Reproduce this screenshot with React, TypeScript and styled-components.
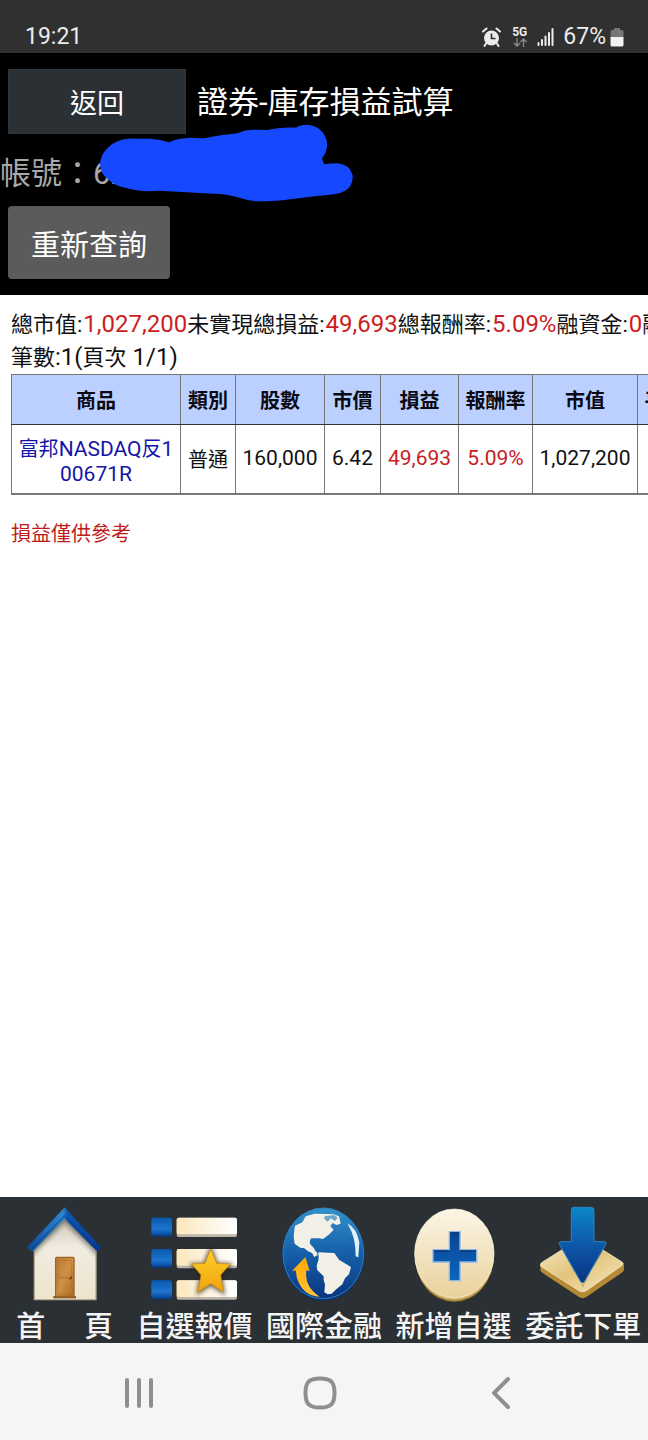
import React from 'react';
import styled, { createGlobalStyle } from 'styled-components';

const GlobalStyle = createGlobalStyle`
  * { box-sizing: border-box; }
  body {
    margin: 0;
    background: #fff;
    font-family: Roboto, "Noto Sans CJK TC", sans-serif;
  }
  button { font-family: inherit; cursor: pointer; }
`;

const Screen = styled.div`
  display: flex;
  flex-direction: column;
  min-height: 100vh;
  overflow: hidden;
`;

/* ---------- status bar ---------- */

const StatusBar = styled.div`
  display: flex;
  align-items: center;
  justify-content: space-between;
  height: 53px;
  padding: 20px 24px 0 25px;
  background: #303030;
  color: #ececec;
  font-size: 23px;
  line-height: 32px;
`;

const StatusGroup = styled.div`
  display: flex;
  align-items: center;
`;

const StatusIcon = styled.svg<{ $gap?: number }>`
  display: block;
  margin-right: ${(p) => p.$gap ?? 0}px;
`;

const Network = styled.div`
  display: flex;
  flex-direction: column;
  align-items: center;
  margin-right: 10px;
  font-size: 12px;
  font-weight: 700;
  line-height: 11px;
`;

const Percent = styled.span`
  margin-right: 4px;
`;

/* ---------- header ---------- */

const Header = styled.header`
  position: relative;
  display: flex;
  flex-direction: column;
  align-items: flex-start;
  padding: 16px 0 16px;
  background: #000;
  color: #fff;
`;

const TitleRow = styled.div`
  display: flex;
  align-items: center;
  gap: 11px;
  padding-left: 8px;
`;

const BackButton = styled.button`
  width: 178px;
  height: 65px;
  border: 1px solid #30363a;
  background: #2b3034;
  color: #fff;
  font-size: 27px;
`;

const Title = styled.h1`
  margin: 0;
  padding-top: 2px;
  font-size: 31px;
  font-weight: 400;
  line-height: 40px;
`;

const Account = styled.div`
  padding: 20px 0 12px;
  color: #a9a9a9;
  font-size: 31px;
  line-height: 40px;
`;

const Scribble = styled.svg`
  position: absolute;
  left: 99px;
  top: 71px;
`;

const QueryButton = styled.button`
  height: 73px;
  margin-left: 8px;
  padding: 0 23px;
  border: 0;
  border-radius: 4px;
  background: #5b5b5c;
  color: #fff;
  font-size: 29px;
`;

/* ---------- report ---------- */

const Report = styled.main`
  flex: 1;
  padding: 13px 0 0 11px;
  overflow: hidden;
  background: #fff;
  color: #111;
`;

const Summary = styled.p`
  margin: 0;
  font-size: 22px;
  line-height: 33px;
  white-space: nowrap;
`;

const Latin = styled.span`
  font-size: 24px;
  line-height: 24px;
`;

const Value = styled(Latin)`
  margin-left: 1px;
  color: #cc1e1e;
`;

const Holdings = styled.table`
  width: 720px;
  table-layout: fixed;
  border-collapse: collapse;
  text-align: center;
  font-size: 21px;
  line-height: 25px;
`;

const Col = styled.col<{ $w: number }>`
  width: ${(p) => p.$w}px;
`;

const HeadCell = styled.th`
  height: 50px;
  padding: 4px 0 0;
  border: 1px solid #777;
  border-bottom-color: #333;
  background: #bbd0ff;
  color: #0a0a14;
  font-size: 20px;
  font-weight: 700;
  white-space: nowrap;
`;

const Cell = styled.td<{ $tone?: 'gain' }>`
  height: 69px;
  padding: 0;
  border: 1px solid #777;
  border-bottom-width: 2px;
  color: ${(p) => (p.$tone === 'gain' ? '#c8201f' : '#111')};
`;

const Han = styled.span`
  font-size: 20px;
`;

const Kind = styled.div`
  padding-top: 4px;
  font-size: 20px;
`;

const ProductLink = styled.a`
  display: block;
  padding-top: 6px;
  color: #1414a8;
  text-decoration: none;
`;

const Notice = styled.p`
  margin: 24px 0 0;
  color: #bf1a1a;
  font-size: 20px;
  line-height: 30px;
`;

/* ---------- bottom bars ---------- */

const TabBar = styled.nav`
  display: grid;
  grid-template-columns: repeat(5, 1fr);
  height: 146px;
  background: #2b3034;
`;

const Tab = styled.button`
  display: flex;
  flex-direction: column;
  align-items: center;
  gap: 3px;
  padding: 9px 0 0;
  border: 0;
  background: none;
  color: #f4f4f4;
  font-size: 29px;
  font-weight: 500;
  line-height: 36px;
  white-space: nowrap;
`;

const SystemNav = styled.nav`
  display: grid;
  grid-template-columns: repeat(3, 1fr);
  height: 97px;
  padding: 3px 56px 0 48px;
  background: #f5f5f5;
`;

const NavKey = styled.button`
  display: flex;
  align-items: center;
  justify-content: center;
  padding: 0;
  border: 0;
  background: none;
`;

/* ---------- tab drawings ---------- */

const HomeIcon = () => (
  <svg width="90" height="100" viewBox="60 27 270 300" aria-hidden="true">
    <defs>
      <linearGradient id="wall" x1="0" y1="0" x2="0" y2="1">
        <stop offset="0" stopColor="#cfc8ba" />
        <stop offset="0.35" stopColor="#f1ece1" />
        <stop offset="1" stopColor="#eee4cd" />
      </linearGradient>
      <linearGradient id="roof" x1="0" y1="0" x2="1" y2="0">
        <stop offset="0" stopColor="#0c4a9c" />
        <stop offset="0.48" stopColor="#2f86cf" />
        <stop offset="0.55" stopColor="#0d57b0" />
        <stop offset="1" stopColor="#083a8e" />
      </linearGradient>
      <linearGradient id="door" x1="0" y1="0" x2="1" y2="1">
        <stop offset="0" stopColor="#b87a35" />
        <stop offset="0.5" stopColor="#d19145" />
        <stop offset="1" stopColor="#a96623" />
      </linearGradient>
      <filter id="eaves" x="-20%" y="-20%" width="140%" height="140%">
        <feGaussianBlur stdDeviation="6" />
      </filter>
      <clipPath id="wallShape">
        <path d="M103 158 194 66l94 92v150H103z" />
      </clipPath>
    </defs>
    <path d="M103 158 194 66l94 92v150H103z" fill="url(#wall)" stroke="#b5ac92" strokeWidth="4" />
    <g clipPath="url(#wallShape)">
      <path d="M90 166 194 62l104 104" fill="none" stroke="#5c564c" strokeWidth="24" opacity="0.6" filter="url(#eaves)" />
    </g>
    <path d="M194 31 303 151l-11 13-98-98-97 98-16-13z" fill="url(#roof)" />
    <path d="M92 158 194 56l100 102" fill="none" stroke="#0a2f75" strokeWidth="4" opacity="0.45" />
    <path d="M160 297h68v7h-68z" fill="#8e5a22" />
    <rect x="167" y="181" width="55" height="117" rx="3" fill="url(#door)" stroke="#9c642a" strokeWidth="4" />
    <path d="M174 190h41v50h-41zM174 244h41v48h-41z" fill="none" stroke="#ad7432" strokeWidth="2" />
    <circle cx="211" cy="242" r="5" fill="#6a3d10" />
    <circle cx="209" cy="240" r="2" fill="#f6dca0" />
  </svg>
);

const WatchIcon = () => (
  <svg width="90" height="100" viewBox="58 27 270 300" aria-hidden="true">
    <defs>
      <linearGradient id="cube" x1="0" y1="0" x2="0" y2="1">
        <stop offset="0" stopColor="#0b59ad" />
        <stop offset="0.65" stopColor="#1c74d0" />
        <stop offset="1" stopColor="#0a4a9a" />
      </linearGradient>
      <linearGradient id="bar" x1="0" y1="0" x2="1" y2="0">
        <stop offset="0" stopColor="#fde7bb" />
        <stop offset="0.6" stopColor="#fdf6e6" />
        <stop offset="1" stopColor="#ffffff" />
      </linearGradient>
      <linearGradient id="star" x1="0" y1="0" x2="0" y2="1">
        <stop offset="0" stopColor="#ffd02a" />
        <stop offset="1" stopColor="#f0a20c" />
      </linearGradient>
      <filter id="glow" x="-30%" y="-30%" width="160%" height="160%">
        <feGaussianBlur stdDeviation="7" />
      </filter>
    </defs>
    {[62, 156, 250].map((y) => (
      <g key={y}>
        <rect x="65" y={y} width="62" height="57" rx="8" fill="#083c80" />
        <rect x="65" y={y} width="62" height="52" rx="8" fill="url(#cube)" />
        <rect x="141" y={y} width="181" height="58" rx="6" fill="#bdb6a8" />
        <rect x="141" y={y} width="181" height="50" rx="6" fill="url(#bar)" />
      </g>
    ))}
    <path d="M243 156l18 45 41 2-29 33 8 51-38-25-38 25 8-51-27-33 38-2z" fill="#2b2210" stroke="#2b2210" strokeWidth="8" opacity="0.7" filter="url(#glow)" />
    <path d="M243 156l18 43 41 2-29 33 8 51-38-25-38 25 9-51-28-33 40-2z" fill="url(#star)" stroke="#c9860a" strokeWidth="2" />
  </svg>
);

const GlobeIcon = () => (
  <svg width="90" height="100" viewBox="58 27 270 300" aria-hidden="true">
    <defs>
      <linearGradient id="sea" x1="0" y1="0" x2="0" y2="1">
        <stop offset="0" stopColor="#3391cb" />
        <stop offset="0.5" stopColor="#165fa9" />
        <stop offset="1" stopColor="#0a3580" />
      </linearGradient>
      <linearGradient id="swoosh" x1="0" y1="0" x2="0" y2="1">
        <stop offset="0" stopColor="#ffa800" />
        <stop offset="1" stopColor="#ffc43a" />
      </linearGradient>
    </defs>
    <ellipse cx="191" cy="172" rx="124" ry="139" fill="#0b346f" />
    <ellipse cx="191" cy="169" rx="121" ry="136" fill="url(#sea)" stroke="#2f7fba" strokeWidth="3" />
    <path d="M106 86L128 76 138 58 165 50 195 51 222 52 238 58 243 80 230 84 219 78 212 88 222 98 209 112 190 126 178 124 154 124 150 134 152 142 163 154 167 162 172 166 174 174 164 180 157 168 144 162 134 154 122 152 105 140 102 120 104 98z" fill="#f3f0e7" />
    <path d="M195 58l29-4 10 8-8 10-13-8-9 10-10-8z" fill="#3b91c6" opacity="0.75" />
    <path d="M176 166L224 168 238 188 274 210 268 232 256 244 248 262 228 278 216 290 204 292 194 286 196 262 192 250 192 238 173 220 171 206 177 186z" fill="#f3f0e7" />
    <path d="M263 79q28 15 36 57l-3 45-8-3q1-57-25-99z" fill="#e2f1fb" />
    <path d="M137 180L150 222 140 220Q134 270 180 299 130 298 112 244L108 220 97 222z" fill="url(#swoosh)" />
  </svg>
);

const AddIcon = () => (
  <svg width="90" height="100" viewBox="57 27 270 300" aria-hidden="true">
    <defs>
      <linearGradient id="coin" x1="0" y1="0" x2="0" y2="1">
        <stop offset="0" stopColor="#fcf6e6" />
        <stop offset="1" stopColor="#e9d19c" />
      </linearGradient>
      <linearGradient id="plus" x1="0" y1="0" x2="0" y2="1">
        <stop offset="0" stopColor="#0a4593" />
        <stop offset="1" stopColor="#0a66bd" />
      </linearGradient>
    </defs>
    <ellipse cx="193" cy="178" rx="118" ry="136" fill="#a68233" />
    <ellipse cx="193" cy="174" rx="119" ry="135" fill="#d6b976" />
    <ellipse cx="193" cy="169" rx="119" ry="133" fill="url(#coin)" stroke="#fdf7e8" strokeWidth="2" />
    <path d="M178 104h32v54h50v37h-50v56h-32v-56h-49v-37h49z" fill="url(#plus)" stroke="#8fb6e6" strokeWidth="4" />
    <path d="M180 108h28M131 162h47M210 162h48" stroke="#062f6d" strokeWidth="6" opacity="0.6" />
  </svg>
);

const OrderIcon = () => (
  <svg width="90" height="100" viewBox="60 27 270 300" aria-hidden="true">
    <defs>
      <linearGradient id="plate" x1="0" y1="0" x2="1" y2="1">
        <stop offset="0" stopColor="#f7ecc9" />
        <stop offset="0.5" stopColor="#e3c47c" />
        <stop offset="1" stopColor="#f6e9c4" />
      </linearGradient>
      <linearGradient id="arrow" x1="0" y1="0" x2="0" y2="1">
        <stop offset="0" stopColor="#0c86c9" />
        <stop offset="0.5" stopColor="#0d57a9" />
        <stop offset="1" stopColor="#0a327f" />
      </linearGradient>
    </defs>
    <path d="M67 206q0-7 8-11l110-70q8-5 16 0l110 70q8 4 7 11v11q0 6-8 11l-105 72q-11 7-22 0L75 229q-8-5-8-12z" fill="#b58a35" />
    <path d="M67 204q0-6 8-10l110-69q8-5 16 0l110 69q9 5 0 12l-106 75q-11 7-22 0L75 212q-8-4-8-8z" fill="url(#plate)" stroke="#fbf3d9" strokeWidth="2" />
    <path d="M124 142l69 125 77-132-10 8-66 128-60-120z" fill="#5c4514" opacity="0.45" />
    <path d="M168 31h51q9 0 9 9v94h31q8 0 4 8l-64 112q-5 7-11 0L125 143q-4-9 5-9h30V40q0-9 8-9z" fill="url(#arrow)" stroke="#2b86c6" strokeWidth="3" />
  </svg>
);

const tabs = [
  { label: '首\u3000\u2004頁', icon: <HomeIcon /> },
  { label: '自選報價', icon: <WatchIcon /> },
  { label: '國際金融', icon: <GlobeIcon /> },
  { label: '新增自選', icon: <AddIcon /> },
  { label: '委託下單', icon: <OrderIcon /> },
];

const columns = [
  { name: '商品', width: 169 },
  { name: '類別', width: 55 },
  { name: '股數', width: 89 },
  { name: '市價', width: 56 },
  { name: '損益', width: 78 },
  { name: '報酬率', width: 74 },
  { name: '市值', width: 105 },
  { name: '平均成本', width: 94 },
];

export default function App() {
  return (
    <>
      <GlobalStyle />
      <Screen>
        <StatusBar>
          <span>19:21</span>
          <StatusGroup>
            <StatusIcon $gap={11} width="19" height="20" viewBox="0 0 19 20" aria-label="鬧鐘">
              <circle cx="9.500" cy="11" r="7.500" fill="#ececec" />
              <path d="M1 4.500 4.500 1.500M14.500 1.500 18 4.500M4 16.500 2.500 19M15 16.500l1.500 2.500" stroke="#ececec" strokeWidth="2" strokeLinecap="round" />
              <path d="M9.500 6.500v5h4" fill="none" stroke="#303030" strokeWidth="1.600" />
            </StatusIcon>
            <Network>
              5G
              <svg width="14" height="9" viewBox="0 0 14 9" aria-hidden="true">
                <path d="M4 0v8M1 5l3 3 3-3M10.500 9V1M7.500 4l3-3 3 3" fill="none" stroke="#8c8c8c" strokeWidth="1.300" />
              </svg>
            </Network>
            <StatusIcon $gap={9} width="17" height="19" viewBox="0 0 17 19" aria-label="訊號">
              <path d="M1.500 18v-2M5 18v-5M8.500 18V9.500M12 18V6M15.500 18V2" stroke="#ececec" strokeWidth="2" strokeLinecap="round" />
            </StatusIcon>
            <Percent>67%</Percent>
            <StatusIcon width="14" height="20" viewBox="0 0 14 20" aria-label="電池">
              <path d="M4 1h6v2h2q1.500 0 1.500 1.500V10H.500V4.500Q.500 3 2 3h2z" fill="#777" />
              <path d="M.500 10h13v8q0 1.500-1.500 1.500H2Q.500 19.500.500 18z" fill="#f2f2f2" />
            </StatusIcon>
          </StatusGroup>
        </StatusBar>

        <Header>
          <TitleRow>
            <BackButton type="button">返回</BackButton>
            <Title>證券-庫存損益試算</Title>
          </TitleRow>
          <Account>帳號：62</Account>
          <QueryButton type="button">重新查詢</QueryButton>
          <Scribble width="255" height="78" viewBox="297 12 764 233" aria-hidden="true">
            <path
              fill="#1548ff"
              d="M300 130Q304 100 322 84Q345 58 390 55L450 56Q480 58 508 66Q535 54 570 53L612 54Q660 43 712 39Q735 29 760 29L800 30Q830 22 865 22L888 22Q900 14 920 14Q950 15 968 38Q982 58 980 80Q978 98 965 115L971 132Q990 129 1012 129Q1048 132 1057 165Q1060 205 1022 218Q990 226 950 227L870 237Q830 243 770 243Q740 241 715 232Q680 222 640 221L560 216L475 212Q440 215 415 211Q370 204 345 193Q318 175 308 160Q300 145 300 130Z"
            />
          </Scribble>
        </Header>

        <Report>
          <Summary>
            總市值:<Value>1,027,200</Value>未實現總損益:<Value>49,693</Value>總報酬率:
            <Value>5.09%</Value>融資金:<Value>0</Value>融券金:<Value>0</Value>
          </Summary>
          <Summary>
            筆數<Latin>:1(</Latin>頁次<Latin> 1/1)</Latin>
          </Summary>
          <Holdings>
            <colgroup>
              {columns.map((c) => (
                <Col key={c.name} $w={c.width} />
              ))}
            </colgroup>
            <thead>
              <tr>
                {columns.map((c) => (
                  <HeadCell key={c.name} scope="col">{c.name}</HeadCell>
                ))}
              </tr>
            </thead>
            <tbody>
              <tr>
                <Cell>
                  <ProductLink href="#00671R">
                    <Han>富邦</Han>NASDAQ<Han>反</Han>1<br />00671R
                  </ProductLink>
                </Cell>
                <Cell><Kind>普通</Kind></Cell>
                <Cell>160,000</Cell>
                <Cell>6.42</Cell>
                <Cell $tone="gain">49,693</Cell>
                <Cell $tone="gain">5.09%</Cell>
                <Cell>1,027,200</Cell>
                <Cell>6.09</Cell>
              </tr>
            </tbody>
          </Holdings>
          <Notice>損益僅供參考</Notice>
        </Report>

        <TabBar>
          {tabs.map((t) => (
            <Tab key={t.label} type="button">
              {t.icon}
              <span>{t.label}</span>
            </Tab>
          ))}
        </TabBar>

        <SystemNav>
          <NavKey type="button" aria-label="最近使用">
            <svg width="30" height="32" viewBox="0 0 30 32">
              <path d="M3 3v26M15 3v26M27 3v26" stroke="#8f8f8f" strokeWidth="4" strokeLinecap="round" />
            </svg>
          </NavKey>
          <NavKey type="button" aria-label="主畫面">
            <svg width="34" height="34" viewBox="0 0 34 34">
              <path d="M17 2.500C28 2.500 31.500 6 31.500 17S28 31.500 17 31.500 2.500 28 2.500 17 6 2.500 17 2.500z" fill="none" stroke="#8f8f8f" strokeWidth="4" />
            </svg>
          </NavKey>
          <NavKey type="button" aria-label="返回">
            <svg width="18" height="32" viewBox="0 0 18 32">
              <path d="M16 2 2 16l14 14" fill="none" stroke="#8f8f8f" strokeWidth="4" strokeLinecap="round" />
            </svg>
          </NavKey>
        </SystemNav>
      </Screen>
    </>
  );
}
